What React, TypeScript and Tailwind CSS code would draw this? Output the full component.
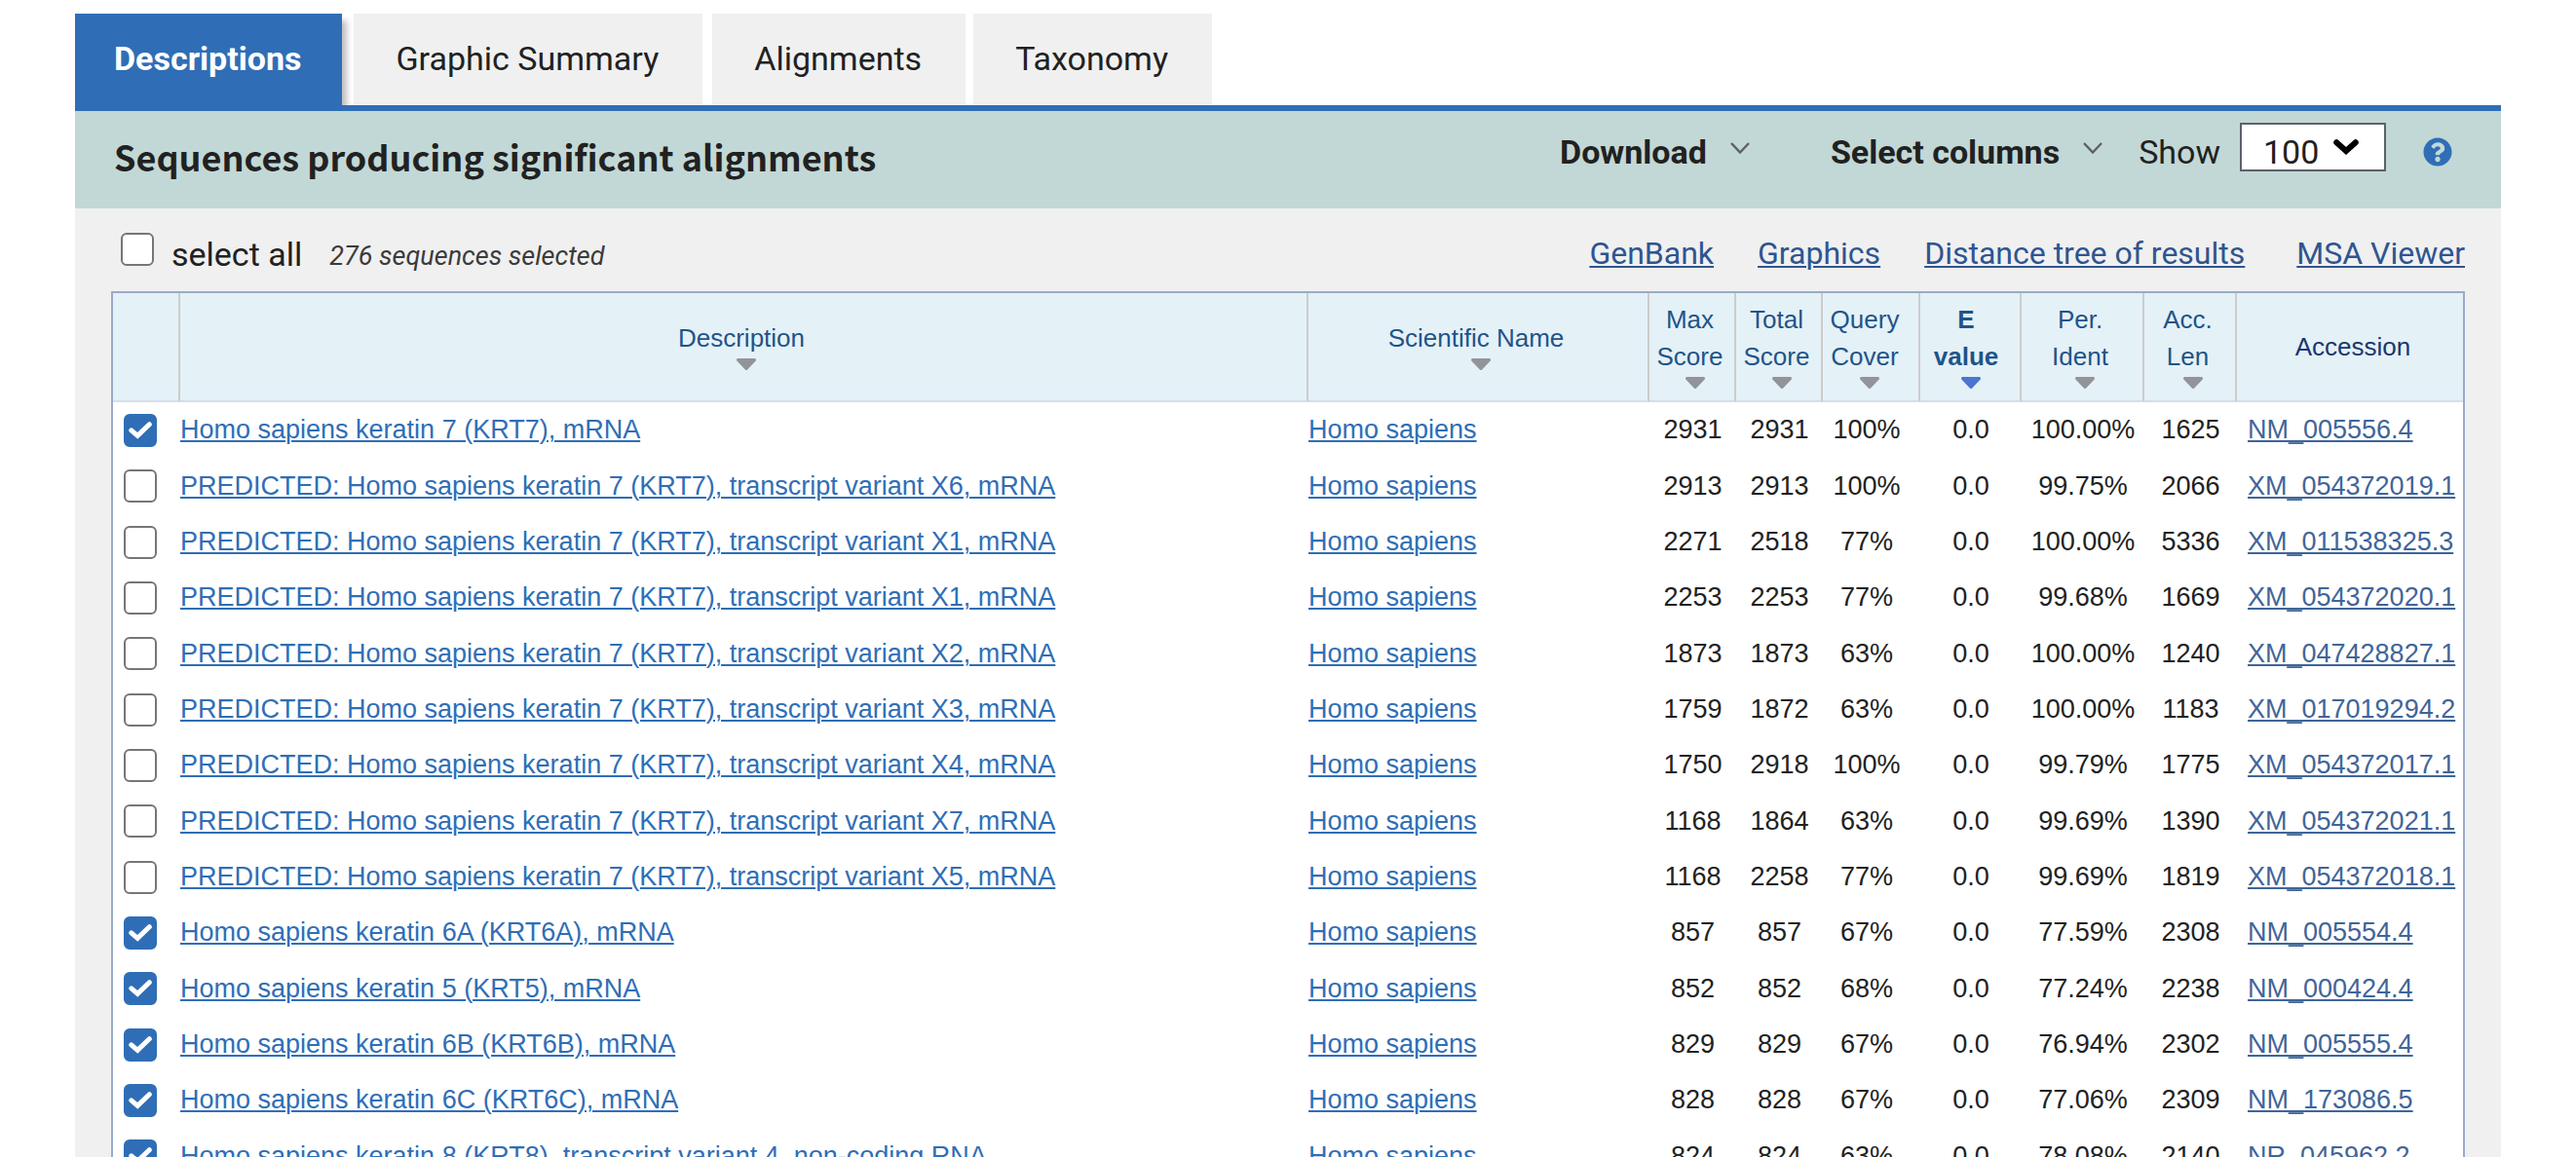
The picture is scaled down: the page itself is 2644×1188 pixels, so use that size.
import { useState } from 'react'
import { FaQuestionCircle } from 'react-icons/fa'

type Row = [string, string, string, string, string, string, string, string]

const P = 'PREDICTED: Homo sapiens keratin 7 (KRT7), transcript variant '

const rows: Row[] = [
  ['Homo sapiens keratin 7 (KRT7), mRNA', '2931', '2931', '100%', '0.0', '100.00%', '1625', 'NM_005556.4'],
  [P + 'X6, mRNA', '2913', '2913', '100%', '0.0', '99.75%', '2066', 'XM_054372019.1'],
  [P + 'X1, mRNA', '2271', '2518', '77%', '0.0', '100.00%', '5336', 'XM_011538325.3'],
  [P + 'X1, mRNA', '2253', '2253', '77%', '0.0', '99.68%', '1669', 'XM_054372020.1'],
  [P + 'X2, mRNA', '1873', '1873', '63%', '0.0', '100.00%', '1240', 'XM_047428827.1'],
  [P + 'X3, mRNA', '1759', '1872', '63%', '0.0', '100.00%', '1183', 'XM_017019294.2'],
  [P + 'X4, mRNA', '1750', '2918', '100%', '0.0', '99.79%', '1775', 'XM_054372017.1'],
  [P + 'X7, mRNA', '1168', '1864', '63%', '0.0', '99.69%', '1390', 'XM_054372021.1'],
  [P + 'X5, mRNA', '1168', '2258', '77%', '0.0', '99.69%', '1819', 'XM_054372018.1'],
  ['Homo sapiens keratin 6A (KRT6A), mRNA', '857', '857', '67%', '0.0', '77.59%', '2308', 'NM_005554.4'],
  ['Homo sapiens keratin 5 (KRT5), mRNA', '852', '852', '68%', '0.0', '77.24%', '2238', 'NM_000424.4'],
  ['Homo sapiens keratin 6B (KRT6B), mRNA', '829', '829', '67%', '0.0', '76.94%', '2302', 'NM_005555.4'],
  ['Homo sapiens keratin 6C (KRT6C), mRNA', '828', '828', '67%', '0.0', '77.06%', '2309', 'NM_173086.5'],
  ['Homo sapiens keratin 8 (KRT8), transcript variant 4, non-coding RNA', '824', '824', '63%', '0.0', '78.08%', '2140', 'NR_045962.2'],
]

function Checkbox({ id, label, defaultChecked = false }: { id: string; label?: string; defaultChecked?: boolean }) {
  return (
    <span className="relative block size-[34px] shrink-0">
      <input
        id={id}
        type="checkbox"
        aria-label={label}
        defaultChecked={defaultChecked}
        className="peer block size-[34px] appearance-none rounded-[6px] border-2 border-[#767676] bg-white checked:border-[#2f6eb6] checked:bg-[#2f6eb6]"
      />
      <svg
        viewBox="0 0 24 18"
        className="pointer-events-none absolute top-2 left-[5px] hidden h-[18px] w-6 peer-checked:block"
        fill="none"
        stroke="#fff"
        strokeWidth="5"
        strokeLinecap="round"
        aria-hidden="true"
      >
        <path d="M2.800 8.800L9.200 14.300L21.300 2.700" />
      </svg>
    </span>
  )
}

function SortArrow({ active = false }: { active?: boolean }) {
  return (
    <svg viewBox="0 0 20 12" className={active ? 'h-3 w-5 fill-[#4a76cf]' : 'h-3 w-5 fill-[#939499]'} aria-hidden="true">
      <path d="M1.6 0h16.8a1.6 1.6 0 0 1 1.1 2.8L11.2 11.4a1.7 1.7 0 0 1-2.4 0L.5 2.8A1.6 1.6 0 0 1 1.6 0z" />
    </svg>
  )
}

function SortHeader({ lines, active = false, className = 'p-0' }: { lines: string[]; active?: boolean; className?: string }) {
  return (
    <th scope="col" aria-sort={active ? 'ascending' : undefined} className={`border-r-2 border-[#cccccc] font-normal ${className}`}>
      <button type="button" className={`flex w-full flex-col items-center pr-1 pb-1 text-[26px] leading-[38px] text-[#1f5489] ${active ? 'font-bold' : ''}`}>
        {lines.map((l) => (
          <span key={l} className="whitespace-nowrap">{l}</span>
        ))}
        <span className="pt-0.5 pl-2.5">
          <SortArrow active={active} />
        </span>
      </button>
    </th>
  )
}

function SmallChevron() {
  return (
    <svg viewBox="0 0 20 12" className="mb-2 h-3 w-5" fill="none" stroke="#5b616b" strokeWidth="2.4" aria-hidden="true">
      <path d="M1 1l9 9.5L19 1" />
    </svg>
  )
}

const menuClass = 'flex h-[60px] items-center gap-6 font-bold'
const tabClass = 'bg-[#f0f0f0] pr-[45px] pb-0.5 pl-[43px] whitespace-nowrap'
const toolLink = 'underline decoration-2 underline-offset-2'
const cellLink = 'whitespace-nowrap text-[#2f6eb6] underline decoration-2 underline-offset-2'

export default function App() {
  const [show, setShow] = useState('100')
  return (
    <div className="h-screen overflow-hidden bg-white px-[77px] pt-3.5 font-['Roboto',sans-serif] text-[34px] text-[#212121]">
      <div role="tablist" className="flex h-[94px]">
        <button role="tab" aria-selected="true" type="button" className="bg-[#2f6eb6] pr-[42px] pb-0.5 pl-10 font-bold whitespace-nowrap text-white shadow-[5px_7px_6px_rgba(0,0,0,0.25)]">
          Descriptions
        </button>
        <button role="tab" type="button" className={`ml-3 ${tabClass}`}>Graphic Summary</button>
        <button role="tab" type="button" className={`ml-2.5 ${tabClass}`}>Alignments</button>
        <button role="tab" type="button" className={`ml-2 ${tabClass}`}>Taxonomy</button>
      </div>

      <main className="relative border-t-[6px] border-[#2f6eb6] bg-[#f0f0f0]">
        <div className="flex h-[100px] items-start justify-between bg-[#c2d8d6] pr-[50px] pl-10">
          <h1 className="pt-5 font-['Noto_Sans_CJK_SC',sans-serif] text-[36px] leading-[52px] font-bold whitespace-nowrap">
            Sequences producing significant alignments
          </h1>
          <div className="flex items-start pt-3 whitespace-nowrap">
            <button type="button" className={menuClass}>
              Download <SmallChevron />
            </button>
            <button type="button" className={`ml-[83px] ${menuClass}`}>
              Select columns <SmallChevron />
            </button>
            <label htmlFor="show" className="ml-[37px] leading-[60px]">Show</label>
            <div className="relative ml-5">
              <select
                id="show"
                value={show}
                onChange={(e) => setShow(e.target.value)}
                className="block h-[50px] w-[150px] appearance-none border-2 border-[#5b616b] bg-white pt-2.5 pl-[22px] leading-9"
              >
                <option>10</option>
                <option>50</option>
                <option>100</option>
                <option>250</option>
              </select>
              <svg viewBox="0 0 26 16" className="pointer-events-none absolute top-[17px] left-24 h-4 w-[26px]" fill="none" stroke="#000" strokeWidth="6" strokeLinecap="round" aria-hidden="true">
                <path d="M3.2 3.2L13 12l9.800-8.800" />
              </svg>
            </div>
            <button type="button" aria-label="Help" className="ml-[38px] flex h-[60px] items-center text-[#2f6eb6]">
              <FaQuestionCircle className="size-[30px]" />
            </button>
          </div>
        </div>

        <div className="flex h-[85px] items-center justify-between pr-[37px] pb-0.5 pl-[47px] whitespace-nowrap">
          <div className="flex items-center">
            <Checkbox id="select-all" />
            <label htmlFor="select-all" className="ml-[18px] pt-2.5 leading-10">select all</label>
            <em className="ml-7 pt-[15px] text-[27px] leading-10 text-[#3b3b3b]">276 sequences selected</em>
          </div>
          <div className="flex gap-[45px] pt-2 text-[32px] leading-10 text-[#2e5590]">
            <a href="#genbank" className={toolLink}>GenBank</a>
            <a href="#graphics" className={toolLink}>Graphics</a>
            <a href="#tree" className={toolLink}>Distance tree of results</a>
            <a href="#msa" className={`ml-2 ${toolLink}`}>MSA Viewer</a>
          </div>
        </div>

        <div className="mx-[37px] border-2 border-[#9aabc8] bg-white">
          <table className="w-full table-fixed border-separate border-spacing-0 font-['Liberation_Sans',sans-serif] text-[27px]">
            <colgroup>
              <col className="w-[69px]" />
              <col />
              <col className="w-[350px]" />
              <col className="w-[89px]" />
              <col className="w-[89px]" />
              <col className="w-[100px]" />
              <col className="w-[104px]" />
              <col className="w-[126px]" />
              <col className="w-[95px]" />
              <col className="w-[232px]" />
            </colgroup>
            <thead>
              <tr className="h-28 bg-[#e4f1f7] [&>*]:border-b-2 [&>*]:border-b-[#d6dde8]">
                <td className="border-r-2 border-[#cccccc]" />
                <SortHeader lines={['Description']} />
                <SortHeader lines={['Scientific Name']} />
                <SortHeader lines={['Max', 'Score']} />
                <SortHeader lines={['Total', 'Score']} />
                <SortHeader lines={['Query', 'Cover']} className="p-0 pr-2" />
                <SortHeader lines={['E', 'value']} active className="p-0 pr-1" />
                <SortHeader lines={['Per.', 'Ident']} />
                <SortHeader lines={['Acc.', 'Len']} />
                <th scope="col" className="p-0 pl-1.5 text-[26px] leading-[38px] font-normal text-[#1b366e]">Accession</th>
              </tr>
            </thead>
            <tbody className="text-center">
              {rows.map(([desc, max, total, cover, e, ident, len, acc], i) => (
                <tr key={acc} className="h-[57px] [&:nth-child(3n+2)]:h-[58px]">
                  <td className="p-0 pl-[11px]">
                    <Checkbox id={`row-${i}`} label={`Select ${acc}`} defaultChecked={i === 0 || i > 8} />
                  </td>
                  <td className="p-0 text-left"><a href={`#${acc}-alignment`} className={cellLink}>{desc}</a></td>
                  <td className="p-0 text-left"><a href={`#${acc}-taxonomy`} className={cellLink}>Homo sapiens</a></td>
                  <td className="p-0">{max}</td>
                  <td className="p-0">{total}</td>
                  <td className="p-0 pr-2.5">{cover}</td>
                  <td className="p-0">{e}</td>
                  <td className="p-0">{ident}</td>
                  <td className="p-0">{len}</td>
                  <td className="p-0 pl-[11px] text-left">
                    <a href={`#${acc}`} className="whitespace-nowrap text-[#3f6599] underline decoration-2 underline-offset-2">{acc}</a>
                  </td>
                </tr>
              ))}
            </tbody>
          </table>
        </div>
      </main>
    </div>
  )
}
